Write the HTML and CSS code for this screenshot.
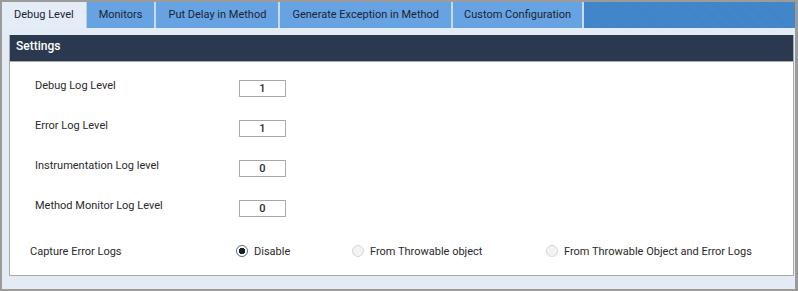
FILE: index.html
```html
<!DOCTYPE html>
<html lang="en">
<head>
  <meta charset="UTF-8" />
  <title>Debug Level</title>
  <link rel="stylesheet" href="styles.css">
</head>
<body>
<div class="frame">
  <div class="tabs">
    <div class="tab active">Debug Level</div>
    <div class="tab">Monitors</div>
    <div class="tab">Put Delay in Method</div>
    <div class="tab">Generate Exception in Method</div>
    <div class="tab">Custom Configuration</div>
  </div>

  <div class="panel">
    <div class="panel-head">Settings</div>
    <div class="panel-body">
      <div class="row">
        <label>Debug Log Level</label>
        <input class="level" type="text" value="1"/>
      </div>
      <div class="row">
        <label>Error Log Level</label>
        <input class="level" type="text" value="1"/>
      </div>
      <div class="row">
        <label>Instrumentation Log level</label>
        <input class="level" type="text" value="0"/>
      </div>
      <div class="row">
        <label>Method Monitor Log Level</label>
        <input class="level" type="text" value="0"/>
      </div>
      <div class="capture">
        <span class="capture-label">Capture Error Logs</span>
        <span class="opt opt-1"><i class="radio checked"></i>Disable</span>
        <span class="opt opt-2"><i class="radio off"></i>From Throwable object</span>
        <span class="opt"><i class="radio off"></i>From Throwable Object and Error Logs</span>
      </div>
    </div>
  </div>
</div>
</body>
</html>
```

FILE: styles.css
```css
body {
  margin: 0;
  font-family: Roboto, "Liberation Sans", Arial, sans-serif;
  font-size: 11px;
  color: #2a2a2a;
}
.frame {
  width: 798px;
  height: 291px;
  box-sizing: border-box;
  border: 2px solid #9b9b9b;
  border-right-width: 3px;
  background: #e3ecf5;
  display: flex;
  flex-direction: column;
}
.tabs {
  height: 26px;
  display: flex;
  background: #3f84c9;
  background-image: repeating-linear-gradient(45deg, rgba(255,255,255,0.025) 0 1px, transparent 1px 2px);
}
.tab {
  height: 26px;
  line-height: 26px;
  padding: 0 12px;
  background: #67a3e2;
  color: #1c2333;
  border-right: 2px solid #c6daf0;
  white-space: nowrap;
}
.tab:last-child {
  padding: 0 11px;
}
.tab.active {
  background: #e4edf7;
  border-right: 1px solid #b8cde4;
}
.panel {
  margin: 7px 1px 13px 7px;
  flex: 1;
  border: 1px solid #a9a9a9;
  border-top: 0;
  background: #fff;
  display: flex;
  flex-direction: column;
}
.panel-head {
  height: 26px;
  line-height: 22px;
  padding-left: 6px;
  background: #2b3950;
  color: #fff;
  font-size: 12px;
  font-weight: 500;
  border-bottom: 1px solid #a9a9a9;
}
.panel-body {
  padding: 14px 0 0 0;
}
.row {
  height: 40px;
  display: flex;
  align-items: flex-start;
  padding-left: 25px;
}
.row label {
  width: 204px;
  line-height: 20px;
}
.level {
  margin-top: 4px;
  width: 47px;
  height: 17px;
  box-sizing: border-box;
  border: 1px solid #a8a8a8;
  padding: 0;
  text-align: center;
  font-family: Roboto, "Liberation Sans", Arial, sans-serif;
  font-size: 11px;
  font-weight: 500;
  color: #2a2a2a;
}
.capture {
  height: 30px;
  display: flex;
  align-items: center;
  padding-left: 20px;
}
.capture-label {
  width: 206px;
}
.opt {
  display: flex;
  align-items: center;
}
.opt-1 {
  width: 116px;
}
.opt-2 {
  width: 194px;
}
.radio {
  width: 12px;
  height: 12px;
  box-sizing: border-box;
  border-radius: 50%;
  margin-right: 6px;
}
.radio.checked {
  border: 1.5px solid #4a6f94;
  background: radial-gradient(circle, #1f1f1f 0 3px, #fff 3.5px);
}
.radio.off {
  border: 1px solid #d6d6d6;
  background: #f3f3f3;
}
```
